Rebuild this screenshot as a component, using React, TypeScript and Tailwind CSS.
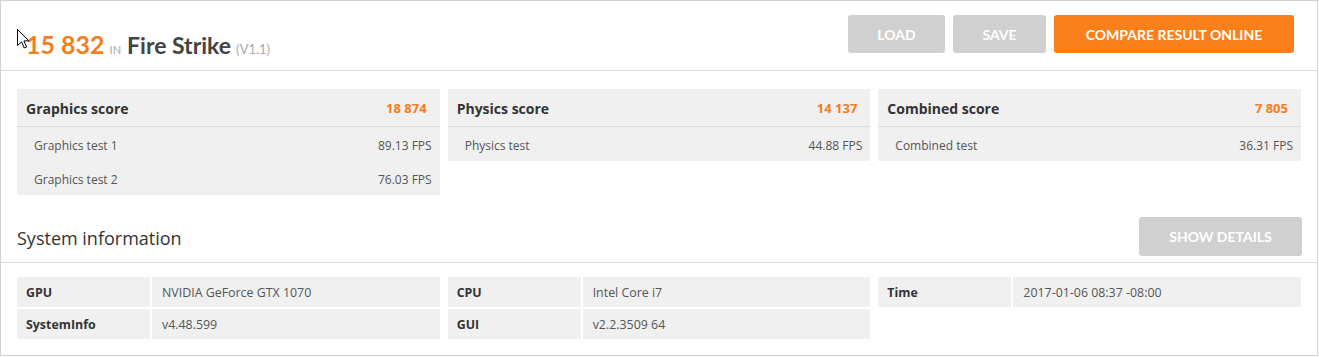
import React from "react";

const orange = "text-[#f47d20]";

type Test = { name: string; fps: string };
type Score = { title: string; value: string; tests: Test[] };

const scores: Score[] = [
    {
        title: "Graphics score",
        value: "18 874",
        tests: [
            { name: "Graphics test 1", fps: "89.13 FPS" },
            { name: "Graphics test 2", fps: "76.03 FPS" },
        ],
    },
    {
        title: "Physics score",
        value: "14 137",
        tests: [{ name: "Physics test", fps: "44.88 FPS" }],
    },
    {
        title: "Combined score",
        value: "7 805",
        tests: [{ name: "Combined test", fps: "36.31 FPS" }],
    },
];

const sysInfo: { label: string; value: string }[][] = [
    [
        { label: "GPU", value: "NVIDIA GeForce GTX 1070" },
        { label: "SystemInfo", value: "v4.48.599" },
    ],
    [
        { label: "CPU", value: "Intel Core i7" },
        { label: "GUI", value: "v2.2.3509 64" },
    ],
    [{ label: "Time", value: "2017-01-06 08:37 -08:00" }],
];

function Cursor() {
    return (
        <svg
            className="absolute left-[16px] top-[28px]"
            width="13"
            height="20"
            viewBox="0 0 13 20"
        >
            <path
                d="M0.5 0.5 L0.5 16.5 L4.5 12.8 L7.3 19 L9.6 18 L6.9 11.9 L12 11.9 Z"
                fill="#fff"
                stroke="#000"
                strokeWidth="1"
                strokeLinejoin="round"
            />
        </svg>
    );
}

function ScoreCard({ score }: { score: Score }) {
    return (
        <div className="bg-[#f0f0f0]">
            <div className="flex h-[38px] items-center justify-between border-b border-[#dcdcdc] pl-[9px] pr-[13px] pt-[2px]">
                <span className="text-[14px] font-bold text-[#333]">
                    {score.title}
                </span>
                <span className={`text-[13px] font-bold ${orange}`}>
                    {score.value}
                </span>
            </div>
            {score.tests.map((t) => (
                <div
                    key={t.name}
                    className="flex h-[34px] items-center justify-between pl-[17px] pr-[8px] pt-[3px] text-[12px] text-[#555]"
                >
                    <span>{t.name}</span>
                    <span>{t.fps}</span>
                </div>
            ))}
        </div>
    );
}

export default function App() {
    return (
        <div
            className="h-[357px] w-[1319px] bg-white"
            style={{ fontFamily: "'Open Sans', sans-serif" }}
        >
            <div className="relative h-[356px] w-[1318px] border border-[#d2d2d2]">
                <Cursor />
                <div
                    className="flex h-[70px] items-start justify-between border-b border-[#dcdcdc] pl-[25px] pr-[23px] pt-[14px]"
                    style={{ fontFamily: "Lato, sans-serif" }}
                >
                    <div className="mt-[11px] flex items-baseline">
                        <span className={`text-[25px] font-bold ${orange}`}>
                            15 832
                        </span>
                        <span className="ml-[5px] text-[11px] text-[#aaa]">
                            IN
                        </span>
                        <span className="ml-[6px] text-[23px] font-bold text-[#444]">
                            Fire Strike
                        </span>
                        <span className="ml-[5px] text-[13px] text-[#aaa]">
                            (V1.1)
                        </span>
                    </div>
                    <div className="flex gap-[8px] text-[14px] font-bold text-white">
                        <button className="h-[38px] w-[97px] rounded-[3px] bg-[#d0d0d0]">
                            LOAD
                        </button>
                        <button className="h-[38px] w-[93px] rounded-[3px] bg-[#d0d0d0]">
                            SAVE
                        </button>
                        <button className="h-[38px] w-[240px] rounded-[3px] bg-[#fb7f1b]">
                            COMPARE RESULT ONLINE
                        </button>
                    </div>
                </div>

                <div className="grid grid-cols-3 items-start gap-[8px] px-[16px] pt-[18px]">
                    {scores.map((s) => (
                        <ScoreCard key={s.title} score={s} />
                    ))}
                </div>

                <div className="mt-[22px] flex items-center justify-between border-b border-[#dcdcdc] pb-[6px] pl-[16px] pr-[15px]">
                    <h2 className="pt-[4px] text-[18px] text-[#333]">
                        System information
                    </h2>
                    <button
                        className="h-[39px] w-[163px] rounded-[3px] bg-[#d0d0d0] text-[14px] font-bold text-white"
                        style={{ fontFamily: "Lato, sans-serif" }}
                    >
                        SHOW DETAILS
                    </button>
                </div>

                <div className="grid grid-cols-3 items-start gap-[8px] px-[16px] pt-[14px]">
                    {sysInfo.map((col, i) => (
                        <div key={i} className="flex flex-col gap-[2px]">
                            {col.map((r) => (
                                <div
                                    key={r.label}
                                    className="grid h-[30px] grid-cols-[133px_1fr] gap-[2px] text-[12.4px]"
                                >
                                    <div className="flex items-center bg-[#f0f0f0] pl-[9px] pt-[3px] font-bold text-[#333]">
                                        {r.label}
                                    </div>
                                    <div className="flex items-center bg-[#f0f0f0] pl-[10px] pt-[3px] text-[#555]">
                                        {r.value}
                                    </div>
                                </div>
                            ))}
                        </div>
                    ))}
                </div>
            </div>
        </div>
    );
}
